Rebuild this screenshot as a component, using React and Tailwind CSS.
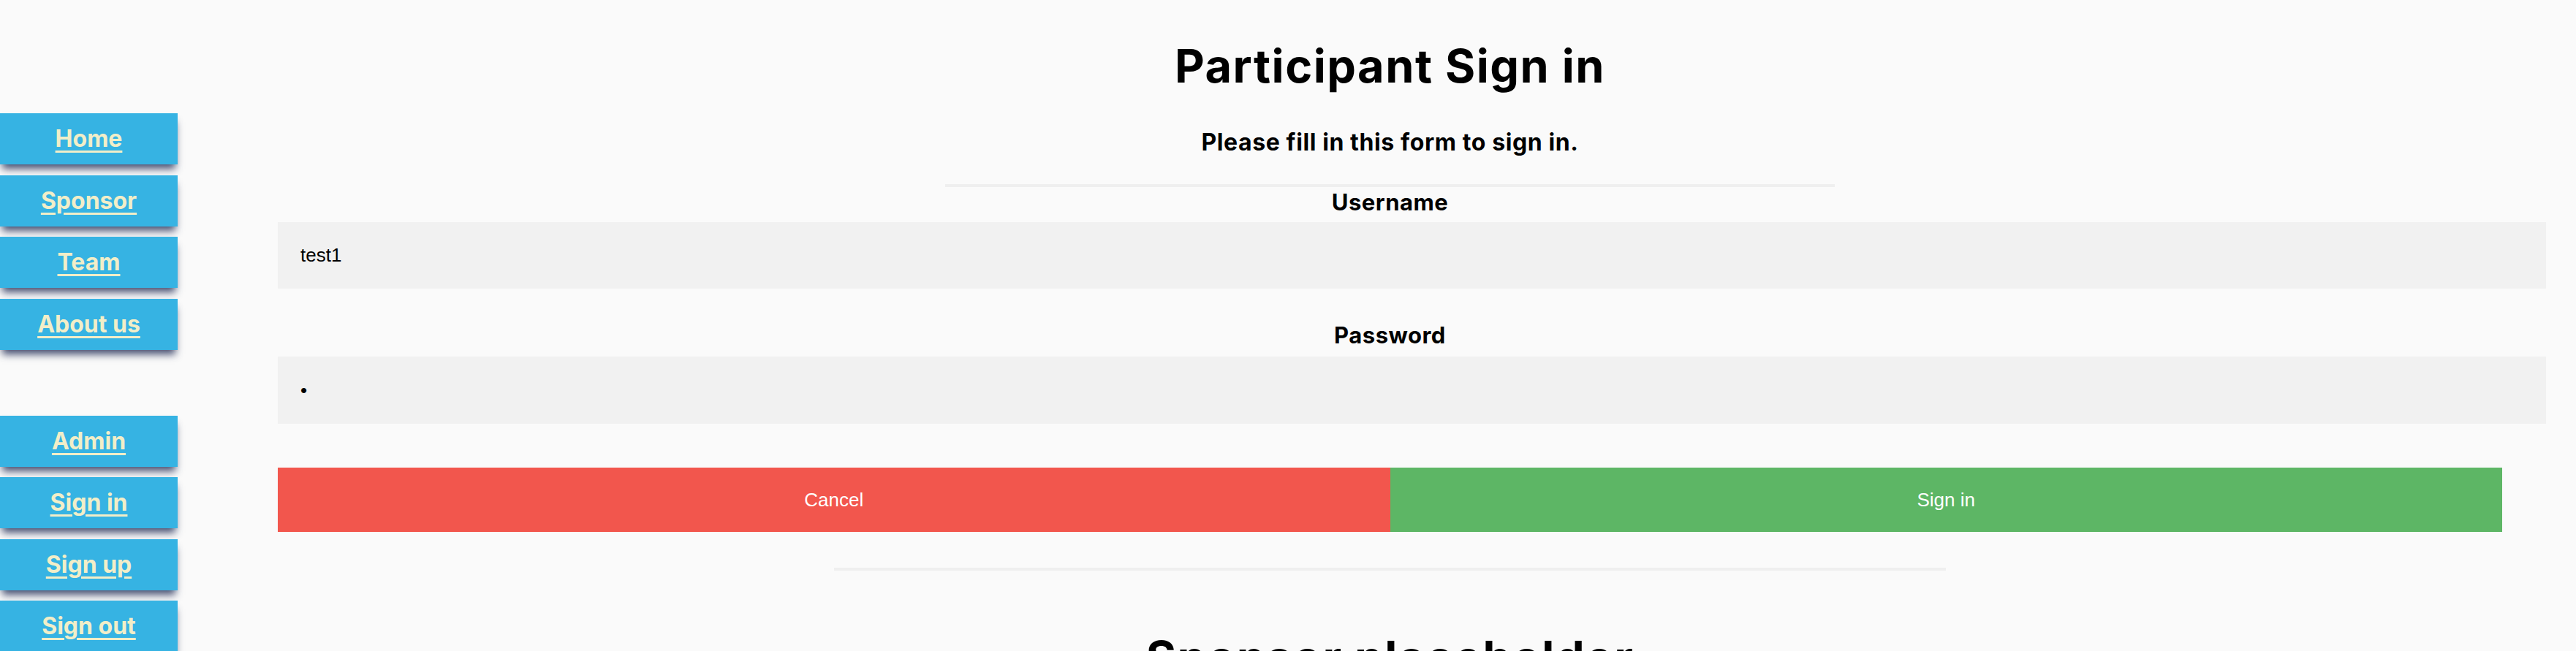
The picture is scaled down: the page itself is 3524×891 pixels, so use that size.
import React from 'react';

const topLinks = ['Home', 'Sponsor', 'Team', 'About us'];
const accountLinks = ['Admin', 'Sign in', 'Sign up', 'Sign out'];

const NavButton = ({ label }) => (
  <a
    href="#"
    className="flex h-[70px] w-[243px] items-center justify-center bg-[#36b3e3] text-[32px] font-bold text-[#f2eec8] underline decoration-[3px] underline-offset-[5px] shadow-[0_9px_10px_-3px_rgba(40,50,90,0.85)]"
  >
    {label}
  </a>
);

const App = () => {
  return (
    <div className="flex min-h-screen bg-[#fafafa] font-['Inter',sans-serif] text-black">
      <nav className="mt-[155px] flex w-[243px] shrink-0 flex-col gap-[90px]">
        <div className="flex flex-col gap-[14.5px]">
          {topLinks.map(l => <NavButton key={l} label={l} />)}
        </div>
        <div className="flex flex-col gap-[14.5px]">
          {accountLinks.map(l => <NavButton key={l} label={l} />)}
        </div>
      </nav>

      <main className="flex-1 pl-[137px] pr-[101px] pt-[59px] text-center">
        <h1 className="text-[63px] font-bold leading-none tracking-[1.5px]">Participant Sign in</h1>
        <p className="mt-[57px] text-[32px] font-bold leading-none tracking-[0.6px]">Please fill in this form to sign in.</p>
        <div className="mx-auto mt-[41px] w-[40%] border-t-4 border-[#efefef]" />

        <form className="text-left">
          <label className="mt-[5px] block text-center text-[31px] font-bold leading-none tracking-[0.5px]">Username</label>
          <input
            readOnly
            defaultValue="test1"
            className="mt-[12px] block h-[91px] w-[calc(100%+60px)] bg-[#f1f1f1] pl-[31px] font-['Liberation_Sans',Arial,sans-serif] text-[26px] outline-none"
          />

          <label className="mt-[48px] block text-center text-[31px] font-bold leading-none tracking-[0.5px]">Password</label>
          <input
            readOnly
            type="password"
            defaultValue="x"
            className="mt-[14px] block h-[92px] w-[calc(100%+60px)] bg-[#f1f1f1] pl-[31px] font-['Liberation_Sans',Arial,sans-serif] text-[26px] outline-none"
          />

          <div className="mt-[60px] flex h-[88px] font-['Liberation_Sans',Arial,sans-serif] text-[26px] text-white">
            <button type="button" className="flex-1 bg-[#f2564d]">Cancel</button>
            <button type="button" className="flex-1 bg-[#5db665]">Sign in</button>
          </div>
        </form>

        <div className="mx-auto mt-[49px] w-1/2 border-t-4 border-[#efefef]" />

        <h1 className="mt-[88px] text-[63px] font-bold leading-none tracking-[1.5px]">Sponsor placeholder</h1>
      </main>
    </div>
  );
};

export default App;
